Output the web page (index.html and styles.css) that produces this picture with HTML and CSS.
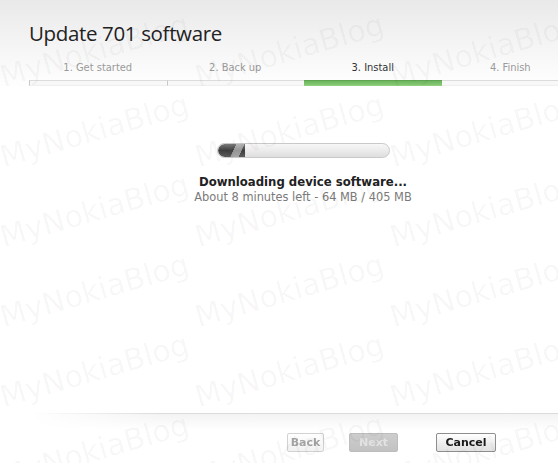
FILE: index.html
```html
<!DOCTYPE html>
<html lang="en">
<head>
<meta charset="utf-8">
<title>Update 701 software</title>
<link rel="stylesheet" href="styles.css">
</head>
<body>
<div class="window">
  <header class="head">
    <h1 class="title">Update 701 software</h1>
    <ol class="steps">
      <li class="step done">1. Get started</li>
      <li class="step done">2. Back up</li>
      <li class="step current">3. Install</li>
      <li class="step">4. Finish</li>
    </ol>
  </header>
  <main class="body">
    <div class="progress"><div class="progress-fill" style="width:16%"></div></div>
    <p class="status">Downloading device software...</p>
    <p class="detail">About 8 minutes left - 64 MB / 405 MB</p>
  </main>
  <footer class="foot">
    <button class="btn btn-back" disabled>Back</button>
    <button class="btn btn-next" disabled>Next</button>
    <button class="btn btn-cancel">Cancel</button>
  </footer>
  <div class="watermark" aria-hidden="true">
    <span>MyNokiaBlog</span><span>MyNokiaBlog</span><span>MyNokiaBlog</span>
    <span>MyNokiaBlog</span><span>MyNokiaBlog</span><span>MyNokiaBlog</span>
    <span>MyNokiaBlog</span><span>MyNokiaBlog</span><span>MyNokiaBlog</span>
    <span>MyNokiaBlog</span><span>MyNokiaBlog</span><span>MyNokiaBlog</span>
    <span>MyNokiaBlog</span><span>MyNokiaBlog</span><span>MyNokiaBlog</span>
    <span>MyNokiaBlog</span><span>MyNokiaBlog</span><span>MyNokiaBlog</span>
  </div>
</div>
</body>
</html>
```
FILE: styles.css
```css
html, body {
  margin: 0;
  padding: 0;
  background: #fff;
}

.window {
  position: relative;
  width: 558px;
  height: 463px;
  overflow: hidden;
  display: flex;
  flex-direction: column;
  background: #fff;
  font-family: "DejaVu Sans Condensed", "DejaVu Sans", sans-serif;
  font-stretch: condensed;
}

/* header */
.head {
  padding: 18px 0 0 29px;
  background: linear-gradient(#e9e9e9 0px, #f6f6f6 50px, #fdfdfd 80px, #fff 90px);
}

.title {
  margin: 0;
  font-family: "Open Sans", "Noto Sans", sans-serif;
  font-stretch: normal;
  font-weight: 400;
  font-size: 20.5px;
  line-height: 30px;
  color: #222;
  letter-spacing: -0.35px;
}

.steps {
  list-style: none;
  margin: 13px 0 0 0;
  padding: 0;
  display: flex;
}

.step {
  flex: 0 0 137.5px;
  display: flex;
  flex-direction: column;
  align-items: center;
  font-size: 11px;
  line-height: 14px;
  color: #9a9a9a;
}

.step::after {
  content: "";
  align-self: stretch;
  margin-top: 5px;
  height: 4px;
  border-top: 1px solid #dcdcdc;
  border-bottom: 1px solid #efefef;
  background: #f8f8f8;
}

.step.done::after {
  border-left: 1px solid #c8c8c8;
}

.step.current {
  color: #333;
}

.step.current::after {
  border-top-color: #5fa452;
  border-bottom-color: #8fcf7d;
  background: linear-gradient(#6db45d, #85c873);
}

/* body */
.body {
  padding: 57px 0 0 48px;
  text-align: center;
}

.progress {
  width: 171px;
  height: 13px;
  margin: 0 auto;
  border: 1px solid #c9c9c9;
  border-radius: 8px;
  background: linear-gradient(#f7f7f7, #e9e9e9 60%, #dedede);
  overflow: hidden;
}

.progress-fill {
  height: 100%;
  border-radius: 7px 0 0 7px;
  background:
    linear-gradient(115deg, transparent 55%, rgba(255,255,255,0.45) 56%, rgba(255,255,255,0.45) 80%, transparent 81%),
    linear-gradient(#7a7a7a, #3f3f3f 50%, #5c5c5c);
}

.status {
  margin: 17px 0 0;
  font-family: "DejaVu Sans", sans-serif;
  font-stretch: normal;
  font-size: 11.7px;
  line-height: 15px;
  font-weight: 700;
  color: #222;
}

.detail {
  margin: 0;
  font-family: "DejaVu Sans", sans-serif;
  font-stretch: normal;
  font-size: 11.4px;
  line-height: 15px;
  color: #7a7a7a;
}

/* footer */
.foot {
  margin-top: auto;
  height: 30px;
  padding: 19px 62px 0 0;
  border-top: 1px solid #dcdcdc;
  background: linear-gradient(#f3f3f3, #fff 16px);
  display: flex;
  justify-content: flex-end;
  align-items: flex-start;
  -webkit-mask-image: linear-gradient(to right, transparent 30px, #000 160px);
  mask-image: linear-gradient(to right, transparent 30px, #000 160px);
}

.btn {
  height: 19px;
  padding: 0;
  margin: 0;
  font-family: "DejaVu Sans", sans-serif;
  font-size: 11px;
  font-weight: 700;
  line-height: 17px;
  border-radius: 2px;
}

.btn-back {
  width: 37px;
  border: 1px solid #d2d2d2;
  background: linear-gradient(#fff, #f1f1f1);
  color: #a3a3a3;
}

.btn-next {
  width: 49px;
  margin-left: 25px;
  border: 1px solid #bdbdbd;
  background: linear-gradient(#cdcdcd, #c2c2c2);
  color: #e2e2e2;
}

.btn-cancel {
  width: 60px;
  margin-left: 38px;
  border: 1px solid #8e8e8e;
  background: linear-gradient(#fff, #ececec 60%, #e2e2e2);
  color: #1a1a1a;
}

/* watermark overlay */
.watermark {
  position: absolute;
  inset: 0;
  padding: 12px 0 0 5px;
  display: grid;
  grid-template-columns: repeat(3, 195px);
  grid-auto-rows: 80px;
  pointer-events: none;
  font-family: "DejaVu Sans", sans-serif;
  font-stretch: normal;
  font-size: 30px;
  color: rgba(0, 0, 0, 0.04);
}

.watermark span {
  align-self: end;
  line-height: 30px;
  white-space: nowrap;
  transform: rotate(-16deg);
  transform-origin: 0 100%;
}
```
